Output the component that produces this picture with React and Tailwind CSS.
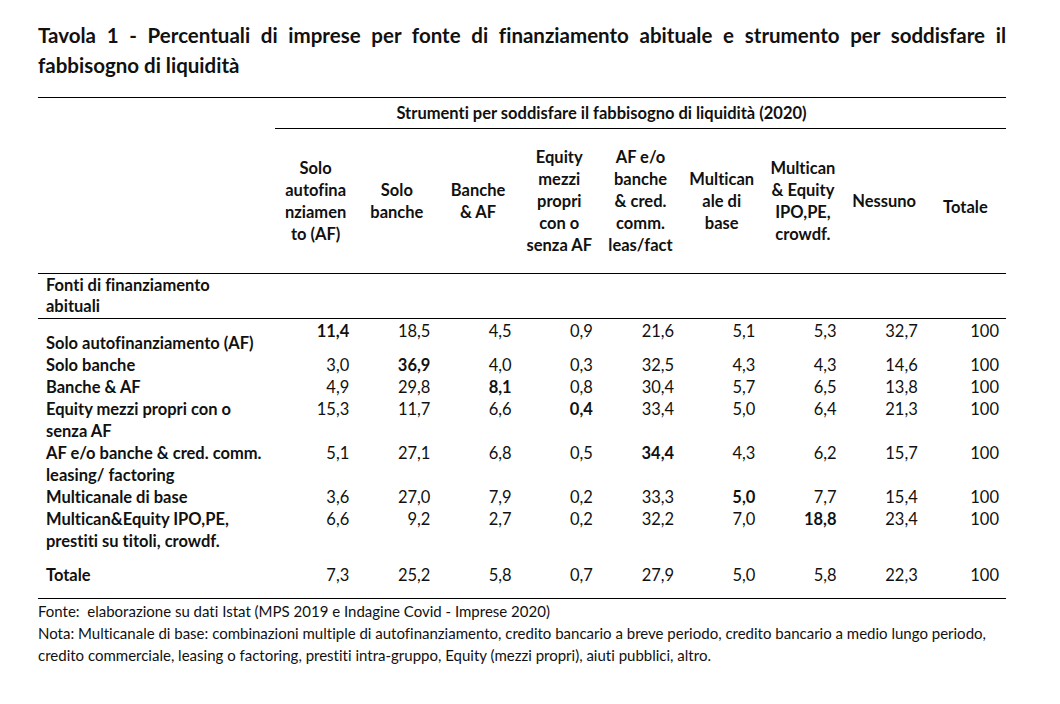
const columns = [
  ['Solo', 'autofina', 'nziamen', 'to (AF)'],
  ['Solo', 'banche'],
  ['Banche', '& AF'],
  ['Equity', 'mezzi', 'propri', 'con o', 'senza AF'],
  ['AF e/o', 'banche', '& cred.', 'comm.', 'leas/fact'],
  ['Multican', 'ale di', 'base'],
  ['Multican', '& Equity', 'IPO,PE,', 'crowdf.'],
  ['Nessuno'],
  ['Totale'],
];

// bold = index of the column printed in bold (diagonal)
const rows = [
  { label: ['Solo autofinanziamento (AF)'], vals: ['11,4', '18,5', '4,5', '0,9', '21,6', '5,1', '5,3', '32,7', '100'], bold: 0 },
  { label: ['Solo banche'], vals: ['3,0', '36,9', '4,0', '0,3', '32,5', '4,3', '4,3', '14,6', '100'], bold: 1 },
  { label: ['Banche & AF'], vals: ['4,9', '29,8', '8,1', '0,8', '30,4', '5,7', '6,5', '13,8', '100'], bold: 2 },
  { label: ['Equity mezzi propri con o', 'senza AF'], vals: ['15,3', '11,7', '6,6', '0,4', '33,4', '5,0', '6,4', '21,3', '100'], bold: 3 },
  { label: ['AF e/o banche & cred. comm.', 'leasing/ factoring'], vals: ['5,1', '27,1', '6,8', '0,5', '34,4', '4,3', '6,2', '15,7', '100'], bold: 4 },
  { label: ['Multicanale di base'], vals: ['3,6', '27,0', '7,9', '0,2', '33,3', '5,0', '7,7', '15,4', '100'], bold: 5 },
  { label: ['Multican&Equity IPO,PE,', 'prestiti su titoli, crowdf.'], vals: ['6,6', '9,2', '2,7', '0,2', '32,2', '7,0', '18,8', '23,4', '100'], bold: 6 },
];

const totals = ['7,3', '25,2', '5,8', '0,7', '27,9', '5,0', '5,8', '22,3', '100'];

function Values({ vals, bold, className = '' }) {
  return vals.map((v, i) => (
    <div key={i} className={`pr-[7px] text-right ${i === bold ? 'font-bold' : ''} ${className}`}>
      {v}
    </div>
  ));
}

export default function App() {
  return (
    <div className="min-h-[704px] bg-white font-['Lato',_'Liberation_Sans',_sans-serif] text-[#111] [font-variant-ligatures:none]">
      <div className="ml-[38px] w-[968px] pt-[20px]">
        <h1 className="text-[20.5px] font-bold leading-[30px]">
          <span className="block [text-align-last:justify]">
            Tavola 1 - Percentuali di imprese per fonte di finanziamento abituale e strumento per soddisfare il
          </span>
          <span className="block">fabbisogno di liquidità</span>
        </h1>

        <div className="mt-[17px] border-t border-black text-[16.5px] leading-[22px]">
          <div className="grid grid-cols-[237px_1fr]">
            <div />
            <div>
              <div className="flex h-[31px] items-center justify-center border-b border-black pr-[78px] font-bold">
                Strumenti per soddisfare il fabbisogno di liquidità (2020)
              </div>
              <div className="grid h-[144px] grid-cols-9 items-center font-bold">
                {columns.map((lines, i) => (
                  <div key={i} className={`text-center ${i === 8 ? 'pt-[12px]' : ''}`}>
                    {lines.map((l) => (
                      <div key={l} className="whitespace-nowrap">
                        {l}
                      </div>
                    ))}
                  </div>
                ))}
              </div>
            </div>
          </div>

          <div className="h-[45px] border-t border-black pl-2 pt-[1px] font-bold leading-[21px]">
            <div>Fonti di finanziamento</div>
            <div>abituali</div>
          </div>

          <div className="border-y border-black">
            {rows.map((r, idx) => (
              <div
                key={idx}
                className={`grid grid-cols-[237px_repeat(9,minmax(0,1fr))] items-start ${idx === 0 ? 'h-[35px]' : ''}`}
              >
                <div className={`pl-2 font-bold ${idx === 0 ? 'self-end' : ''}`}>
                  {r.label.map((l) => (
                    <div key={l} className="whitespace-nowrap">
                      {l}
                    </div>
                  ))}
                </div>
                <Values vals={r.vals} bold={r.bold} className={idx === 0 ? 'pt-[1px]' : ''} />
              </div>
            ))}
            <div className="grid grid-cols-[237px_repeat(9,minmax(0,1fr))] py-[12px]">
              <div className="pl-2 font-bold">Totale</div>
              <Values vals={totals} bold={-1} />
            </div>
          </div>
        </div>

        <div className="pt-[1px] text-[15px] leading-[22px]">
          <div className="whitespace-nowrap">Fonte:&nbsp; elaborazione su dati Istat (MPS 2019 e Indagine Covid - Imprese 2020)</div>
          <div className="whitespace-nowrap">
            Nota: Multicanale di base: combinazioni multiple di autofinanziamento, credito bancario a breve periodo, credito bancario a medio lungo periodo,
          </div>
          <div className="whitespace-nowrap">
            credito commerciale, leasing o factoring, prestiti intra-gruppo, Equity (mezzi propri), aiuti pubblici, altro.
          </div>
        </div>
      </div>
    </div>
  );
}
